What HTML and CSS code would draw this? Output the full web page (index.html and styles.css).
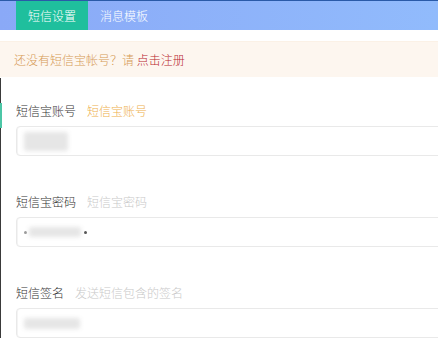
FILE: index.html
```html
<!DOCTYPE html>
<html lang="zh-CN">
<head>
<meta charset="utf-8">
<title>短信设置</title>
<link rel="stylesheet" href="styles.css">
</head>
<body>
<div class="header">
  <div class="tab active">短信设置</div>
  <div class="tab">消息模板</div>
</div>
<div class="notice">还没有短信宝帐号？请 <a class="reg" href="#">点击注册</a></div>
<div class="form">
  <div class="field">
    <div class="label">短信宝账号<span class="hint gold">短信宝账号</span></div>
    <div class="input"><span class="blob b1"></span></div>
  </div>
  <div class="field">
    <div class="label">短信宝密码<span class="hint">短信宝密码</span></div>
    <div class="input"><span class="dot light"></span><span class="blob b2"></span><span class="dot"></span></div>
  </div>
  <div class="field">
    <div class="label">短信签名<span class="hint">发送短信包含的签名</span></div>
    <div class="input"><span class="blob b3"></span></div>
  </div>
</div>
</body>
</html>
```
FILE: styles.css
```css
html, body {
  margin: 0;
  padding: 0;
  background: #fff;
}
body {
  font-family: "Noto Sans CJK SC", "Noto Sans", sans-serif;
  font-size: 12px;
  font-weight: 300;
  color: #333;
  overflow: hidden;
}
.header {
  display: flex;
  height: 29px;
  border-top: 1px solid #2a5aa8;
  background: linear-gradient(90deg, #8aa9f7, #91bbfc);
  padding-left: 16px;
}
.tab {
  width: 72px;
  line-height: 29px;
  text-align: center;
  color: #fff;
  font-size: 12px;
}
.tab.active {
  background: #1fbf9d;
}
.notice {
  margin-top: 11px;
  height: 36px;
  line-height: 36px;
  background: #fdf6ef;
  padding-left: 14px;
  color: #d69a55;
  border-top: 1px solid #fbf1e6;
  box-sizing: border-box;
}
.reg {
  color: #b8262e;
  text-decoration: none;
}
.form {
  position: relative;
  margin-top: 1px;
  border-left: 1px solid #3a3a3a;
  padding: 24px 0 0 15px;
}
.form::before {
  content: "";
  position: absolute;
  left: -1px;
  top: 25px;
  width: 2px;
  height: 25px;
  background: #4cc6a6;
}
.field {
  margin-bottom: 37px;
}
.label {
  line-height: 17px;
  height: 17px;
  color: #333;
}
.hint {
  margin-left: 11px;
  color: #c9c9c9;
}
.hint.gold {
  color: #eeb04c;
}
.input {
  margin-top: 7px;
  height: 28px;
  margin-right: -20px;
  border: 1px solid #e9e9e9;
  border-radius: 4px;
  box-shadow: inset 1px 0 0 #f4f4f4;
  display: flex;
  align-items: center;
  padding-left: 7px;
}
.blob {
  display: block;
  background: #e6e6e6;
  filter: blur(2px);
  border-radius: 2px;
}
.b1 {
  width: 44px;
  height: 19px;
}
.b2 {
  width: 52px;
  height: 10px;
  margin-left: 2px;
}
.b3 {
  width: 56px;
  height: 11px;
}
.dot {
  display: block;
  width: 3px;
  height: 3px;
  border-radius: 50%;
  background: #555;
  margin-left: 3px;
}
.dot.light {
  background: #999;
  margin-left: 0;
}
```
